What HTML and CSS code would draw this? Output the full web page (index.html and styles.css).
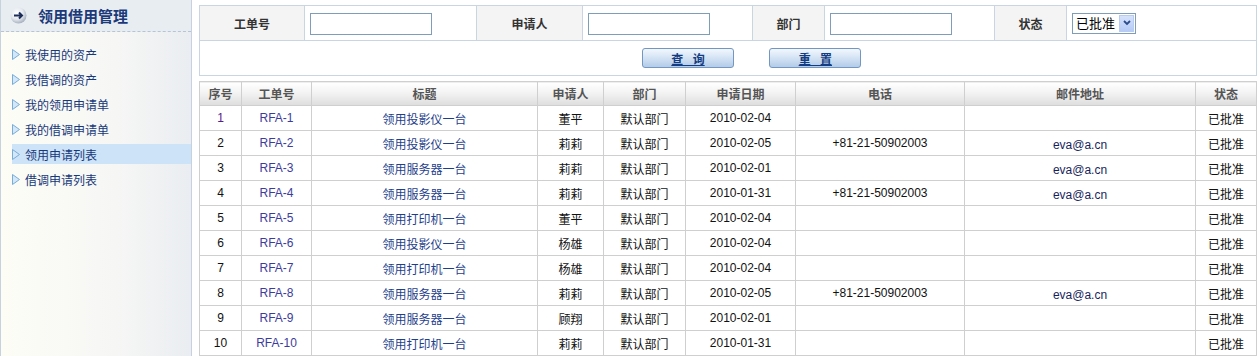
FILE: index.html
```html
<!DOCTYPE html>
<html lang="zh-CN">
<head>
  <meta charset="UTF-8">
  <title>领用申请列表</title>
  <link rel="stylesheet" href="styles.css">
</head>
<body>
  <div class="page">
    <!-- 左侧菜单 -->
    <div class="sidebar">
      <div class="side-head">
        <svg class="head-icon" viewBox="0 0 17 17">
          <defs>
            <radialGradient id="ball" cx="40%" cy="35%" r="65%">
              <stop offset="0" stop-color="#ffffff"/>
              <stop offset="0.6" stop-color="#e4e8ee"/>
              <stop offset="1" stop-color="#aab3c0"/>
            </radialGradient>
          </defs>
          <circle cx="8.5" cy="8.5" r="8" fill="url(#ball)"/>
          <path d="M4 8.5h8M9 5.5l3 3-3 3" fill="none" stroke="#1c2c58" stroke-width="2"/>
        </svg>
        <span class="side-title">领用借用管理</span>
      </div>
      <ul class="side-menu">
        <li><svg class="arrow" viewBox="0 0 8 11"><polygon points="0.5,0.5 7.5,5.5 0.5,10.5"/></svg><a href="#">我使用的资产</a></li>
        <li><svg class="arrow" viewBox="0 0 8 11"><polygon points="0.5,0.5 7.5,5.5 0.5,10.5"/></svg><a href="#">我借调的资产</a></li>
        <li><svg class="arrow" viewBox="0 0 8 11"><polygon points="0.5,0.5 7.5,5.5 0.5,10.5"/></svg><a href="#">我的领用申请单</a></li>
        <li><svg class="arrow" viewBox="0 0 8 11"><polygon points="0.5,0.5 7.5,5.5 0.5,10.5"/></svg><a href="#">我的借调申请单</a></li>
        <li class="active"><svg class="arrow" viewBox="0 0 8 11"><polygon points="0.5,0.5 7.5,5.5 0.5,10.5"/></svg><a href="#">领用申请列表</a></li>
        <li><svg class="arrow" viewBox="0 0 8 11"><polygon points="0.5,0.5 7.5,5.5 0.5,10.5"/></svg><a href="#">借调申请列表</a></li>
      </ul>
    </div>

    <!-- 主体 -->
    <div class="main">
      <table class="search">
        <colgroup>
          <col style="width:105px"><col style="width:172px"><col style="width:106px"><col style="width:170px">
          <col style="width:72px"><col style="width:170px"><col style="width:72px"><col style="width:190px">
        </colgroup>
        <tr>
          <th>工单号</th>
          <td><input type="text" class="text-input"></td>
          <th>申请人</th>
          <td><input type="text" class="text-input"></td>
          <th>部门</th>
          <td><input type="text" class="text-input"></td>
          <th>状态</th>
          <td>
            <span class="select-wrap">
              <select class="status-select">
                <option>已批准</option>
              </select>
              <span class="select-btn">
                <svg viewBox="0 0 8 6"><path d="M1 1l3 3 3-3" fill="none" stroke="#2b4c8c" stroke-width="1.8"/></svg>
              </span>
            </span>
          </td>
        </tr>
        <tr>
          <td colspan="8" class="btn-row">
            <button class="blue-btn">查 询</button>
            <button class="blue-btn">重 置</button>
          </td>
        </tr>
      </table>

      <table class="grid">
        <colgroup>
          <col style="width:42px"><col style="width:70px"><col style="width:226px"><col style="width:66px"><col style="width:82px">
          <col style="width:110px"><col style="width:169px"><col style="width:231px"><col style="width:61px">
        </colgroup>
        <thead>
          <tr>
            <th>序号</th><th>工单号</th><th>标题</th><th>申请人</th><th>部门</th>
            <th>申请日期</th><th>电话</th><th>邮件地址</th><th>状态</th>
          </tr>
        </thead>
        <tbody>
          <tr><td class="seq first">1</td><td><a class="code" href="#">RFA-1</a></td><td><a class="title" href="#">领用投影仪一台</a></td><td>董平</td><td>默认部门</td><td>2010-02-04</td><td></td><td></td><td>已批准</td></tr>
          <tr><td class="seq">2</td><td><a class="code" href="#">RFA-2</a></td><td><a class="title" href="#">领用投影仪一台</a></td><td>莉莉</td><td>默认部门</td><td>2010-02-05</td><td>+81-21-50902003</td><td class="email">eva@a.cn</td><td>已批准</td></tr>
          <tr><td class="seq">3</td><td><a class="code" href="#">RFA-3</a></td><td><a class="title" href="#">领用服务器一台</a></td><td>莉莉</td><td>默认部门</td><td>2010-02-01</td><td></td><td class="email">eva@a.cn</td><td>已批准</td></tr>
          <tr><td class="seq">4</td><td><a class="code" href="#">RFA-4</a></td><td><a class="title" href="#">领用服务器一台</a></td><td>莉莉</td><td>默认部门</td><td>2010-01-31</td><td>+81-21-50902003</td><td class="email">eva@a.cn</td><td>已批准</td></tr>
          <tr><td class="seq">5</td><td><a class="code" href="#">RFA-5</a></td><td><a class="title" href="#">领用打印机一台</a></td><td>董平</td><td>默认部门</td><td>2010-02-04</td><td></td><td></td><td>已批准</td></tr>
          <tr><td class="seq">6</td><td><a class="code" href="#">RFA-6</a></td><td><a class="title" href="#">领用投影仪一台</a></td><td>杨雄</td><td>默认部门</td><td>2010-02-04</td><td></td><td></td><td>已批准</td></tr>
          <tr><td class="seq">7</td><td><a class="code" href="#">RFA-7</a></td><td><a class="title" href="#">领用打印机一台</a></td><td>杨雄</td><td>默认部门</td><td>2010-02-04</td><td></td><td></td><td>已批准</td></tr>
          <tr><td class="seq">8</td><td><a class="code" href="#">RFA-8</a></td><td><a class="title" href="#">领用服务器一台</a></td><td>莉莉</td><td>默认部门</td><td>2010-02-05</td><td>+81-21-50902003</td><td class="email">eva@a.cn</td><td>已批准</td></tr>
          <tr><td class="seq">9</td><td><a class="code" href="#">RFA-9</a></td><td><a class="title" href="#">领用服务器一台</a></td><td>顾翔</td><td>默认部门</td><td>2010-02-01</td><td></td><td></td><td>已批准</td></tr>
          <tr><td class="seq">10</td><td><a class="code" href="#">RFA-10</a></td><td><a class="title" href="#">领用打印机一台</a></td><td>莉莉</td><td>默认部门</td><td>2010-01-31</td><td></td><td></td><td>已批准</td></tr>
        </tbody>
      </table>
    </div>
  </div>
</body>
</html>
```
FILE: styles.css
```css
/* Reset */
* {
  margin: 0;
  padding: 0;
  box-sizing: border-box;
}

body {
  font-family: "Liberation Sans", "Noto Sans CJK SC", sans-serif;
  font-size: 12px;
  color: #222;
  background-color: #fff;
}

.page {
  display: flex;
  height: 356px;
}

/* Sidebar */
.sidebar {
  width: 192px;
  border-left: 1px solid #c8d2de;
  border-right: 1px solid #c8d2de;
  background: linear-gradient(to right, #fdfdf6, #f6f7f5 60%, #eaedf1);
}

.side-head {
  height: 32px;
  display: flex;
  align-items: center;
  padding-left: 9px;
  background-color: #e8edf2;
  border-bottom: 1px dashed #b7c4d5;
}

.head-icon {
  width: 17px;
  height: 17px;
  margin-right: 11px;
}

.side-title {
  font-size: 15px;
  font-weight: bold;
  color: #1c3a7a;
}

.side-menu {
  list-style: none;
  padding: 12px 0 0 11px;
}

.side-menu li {
  height: 20px;
  margin-bottom: 5px;
  display: flex;
  align-items: center;
}

.side-menu li.active {
  background-color: #cce3f8;
}

.side-menu .arrow {
  width: 8px;
  height: 11px;
  margin-right: 5px;
  fill: #d4e7f8;
  stroke: #78acd9;
}

.side-menu a {
  color: #17387a;
  text-decoration: none;
}

/* Main */
.main {
  width: 1057px;
  margin-left: 7px;
  padding-top: 5px;
}

/* Search form */
.search {
  width: 1057px;
  border-collapse: collapse;
  table-layout: fixed;
}

.search th,
.search td {
  border: 1px solid #c9d5e2;
  height: 35px;
}

.search th {
  background-color: #f4f4f4;
  color: #333;
  font-size: 12px;
}

.search td {
  padding-left: 5px;
}

.text-input {
  width: 122px;
  height: 22px;
  border: 1px solid #7f9db9;
  display: block;
  margin-top: 2px;
}

.select-wrap {
  position: relative;
  display: inline-block;
  vertical-align: middle;
}

.status-select {
  appearance: none;
  width: 64px;
  height: 21px;
  border: 1px solid #7f9db9;
  background-color: #fff;
  font-family: "Liberation Sans", "Noto Sans CJK SC", sans-serif;
  font-size: 13px;
  color: #000;
  padding-left: 3px;
  display: block;
}

.select-btn {
  position: absolute;
  top: 2px;
  right: 2px;
  width: 15px;
  height: 17px;
  border: 1px solid #b8cbf0;
  background: linear-gradient(#d6e2fb, #b6cbf6);
  display: flex;
  align-items: center;
  justify-content: center;
  pointer-events: none;
}

.select-btn svg {
  width: 8px;
  height: 6px;
}

.btn-row {
  padding-left: 442px !important;
}

.blue-btn {
  width: 92px;
  height: 20px;
  margin-right: 32px;
  border: 1px solid #7497c2;
  border-radius: 3px;
  background: linear-gradient(#f2f7fd, #d6e5f5 45%, #b3cce8);
  color: #143c82;
  font-family: "Liberation Sans", "Noto Sans CJK SC", sans-serif;
  font-size: 12px;
  font-weight: bold;
  text-decoration: underline;
  word-spacing: 6px;
  vertical-align: middle;
}

/* Data grid */
.grid {
  width: 1057px;
  margin-top: 5px;
  border-collapse: collapse;
  table-layout: fixed;
}

.grid th,
.grid td {
  border: 1px solid #cfcfcf;
  text-align: center;
}

.grid th {
  height: 24px;
  background: linear-gradient(#ffffff, #f3f3f3 45%, #dddddd);
  color: #555;
  font-weight: bold;
}

.grid td {
  height: 25px;
  color: #111;
}

.grid .seq.first {
  color: #55208a;
}

.grid a {
  text-decoration: none;
}

.grid .code {
  color: #3c3c9c;
}

.grid .title {
  color: #1f3f8c;
}

.grid .email {
  color: #1a1f5c;
  padding-top: 3px;
}
```
